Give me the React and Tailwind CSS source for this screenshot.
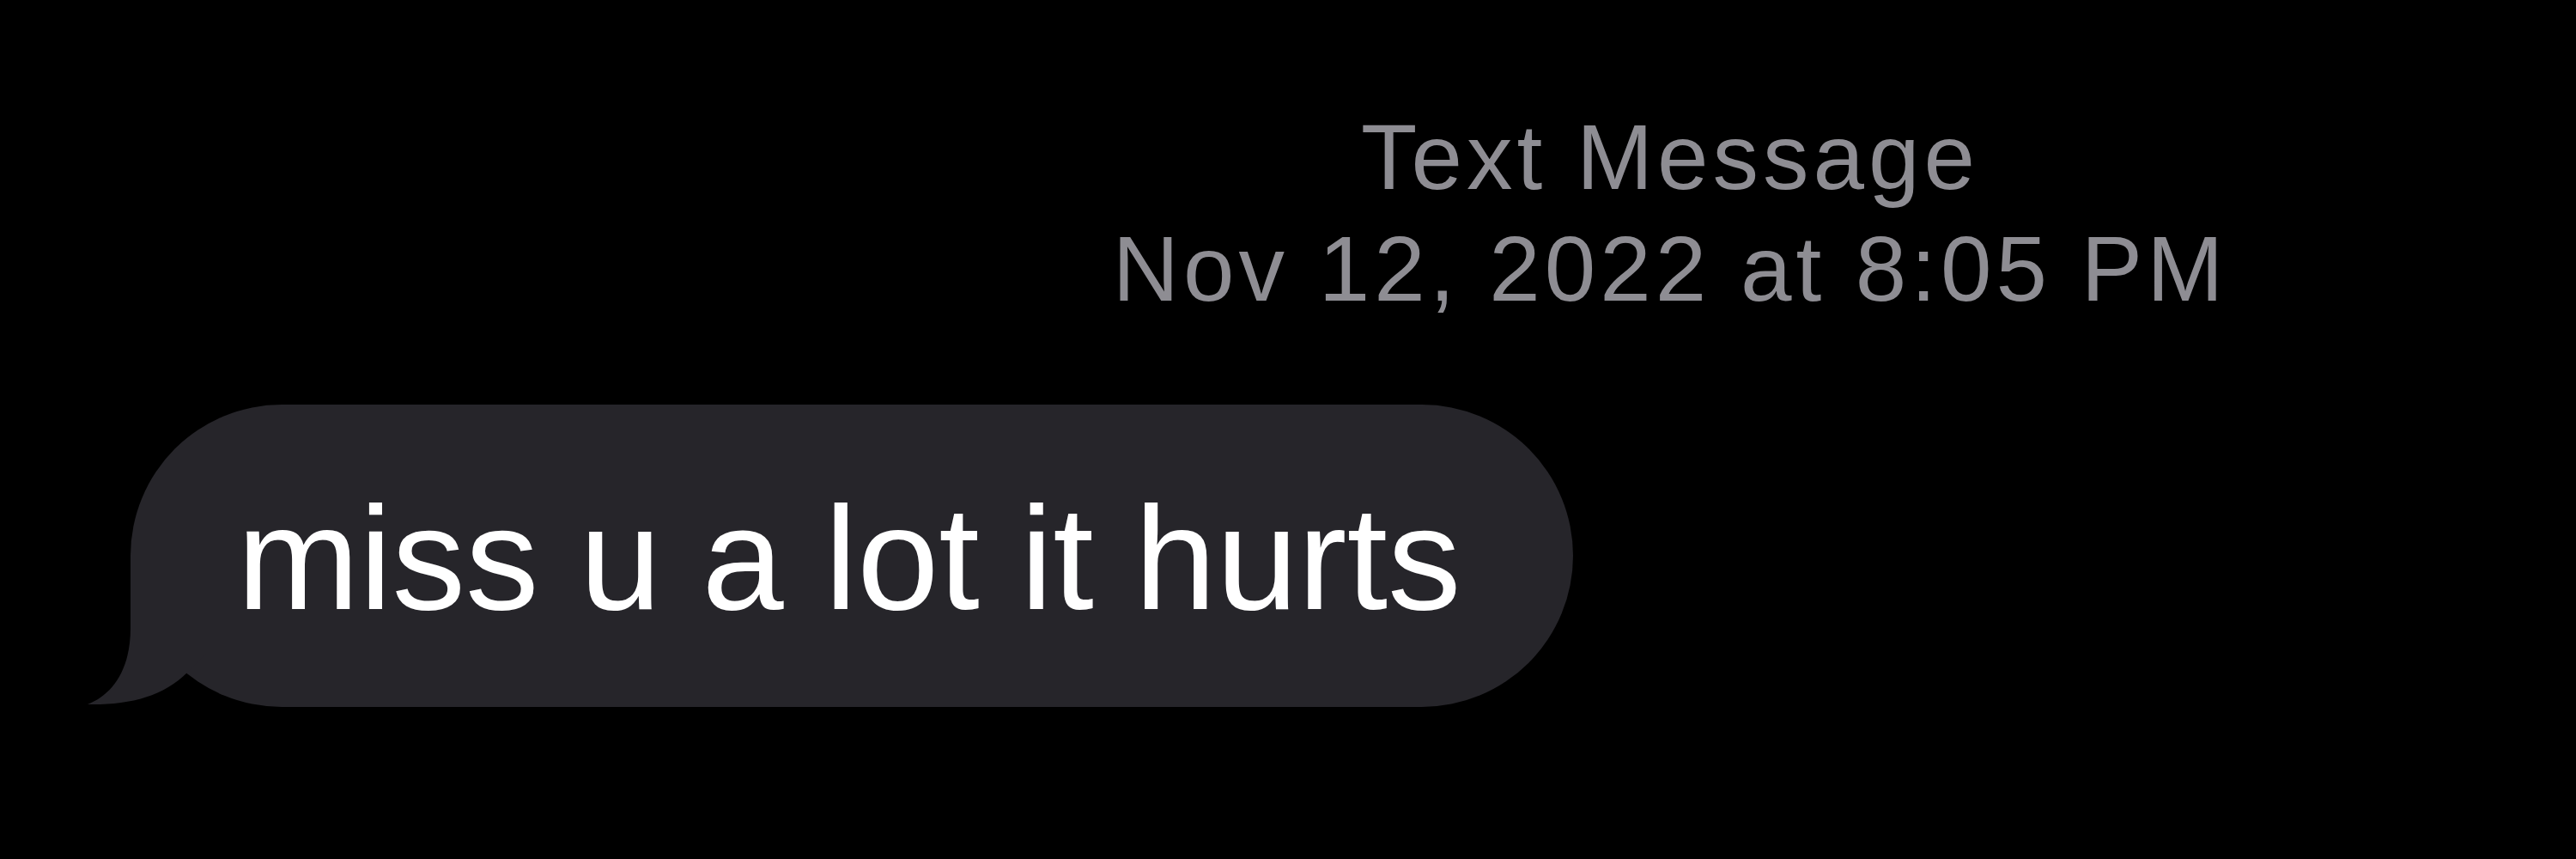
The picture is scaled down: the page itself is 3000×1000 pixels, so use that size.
import React from "react";

function Tail() {
  return (
    <svg
      aria-hidden="true"
      className="absolute left-[-57px] top-[170px] h-[185px] w-[150px]"
      viewBox="0 0 150 185"
    >
      <path
        d="M57 5 L57 90 C57 140 35 168 7 179 C55 180 95 170 123 142 L145 120 L145 5 Z"
        fill="#26252a"
      />
    </svg>
  );
}

export default function App() {
  return (
    <div className="h-[1000px] w-full overflow-hidden bg-black font-['Liberation_Sans',Arial,sans-serif]">
      <div className="pl-[890px] pt-[118px] text-center text-[107px] leading-[130px] tracking-[5px] text-[#8e8d93]">
        <p>Text Message</p>
        <p>Nov 12, 2022 at 8:05 PM</p>
      </div>

      <div className="mt-[93px] flex pl-[152px]">
        <div className="relative rounded-full bg-[#26252a] pb-[88px] pl-[124px] pr-[131px] pt-[93px]">
          <Tail />
          <p className="relative text-[171px] leading-none text-white">
            miss u a lot it hurts
          </p>
        </div>
      </div>
    </div>
  );
}
